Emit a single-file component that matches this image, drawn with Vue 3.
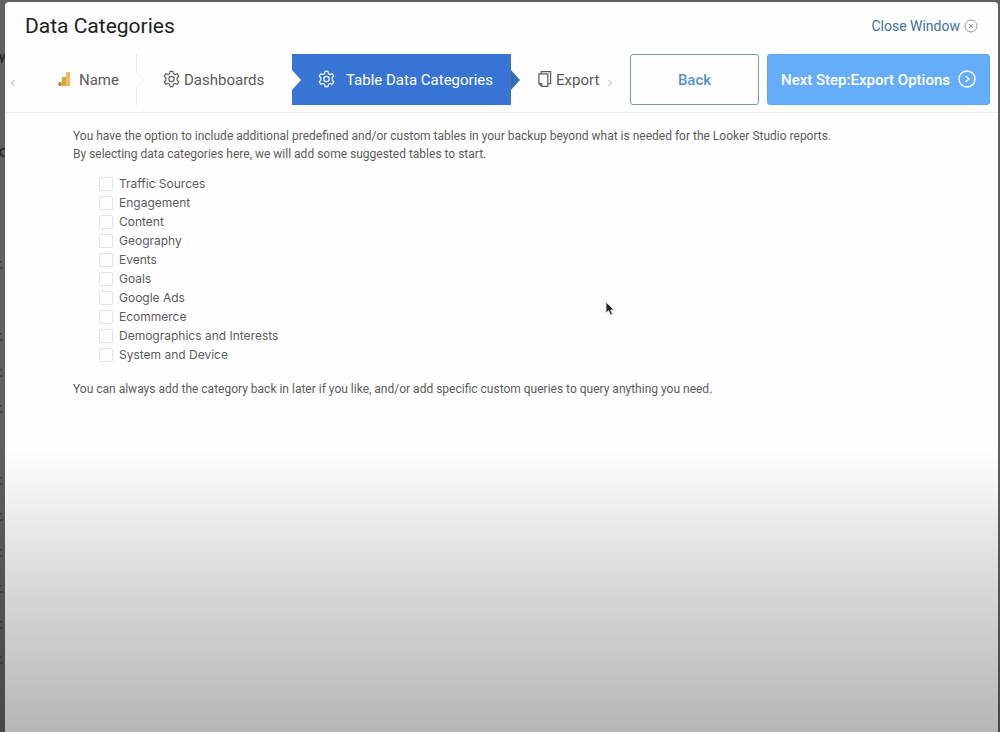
<script setup>
import { ref } from 'vue'

const categories = [
  'Traffic Sources',
  'Engagement',
  'Content',
  'Geography',
  'Events',
  'Goals',
  'Google Ads',
  'Ecommerce',
  'Demographics and Interests',
  'System and Device',
]
const selected = ref([])
const edgeMarks = [262, 334, 370, 406, 478, 514, 550, 586, 622, 657]
const gear =
  'M8 1.5h3l.7 2.500 1.700 1 2.500-.800 1.700 2.700-1.800 1.800v2.600l1.800 1.800-1.700 2.700-2.500-.800-1.700 1-.700 2.500H8l-.700-2.500-1.700-1-2.500.800-1.700-2.700 1.800-1.800V8.700L1.400 6.900l1.700-2.700 2.500.800 1.700-1z'
</script>

<template>
  <div class="backdrop">
    <svg class="behind" width="5" height="700" viewBox="0 0 5 700" aria-hidden="true">
      <path d="M0 54l2 7 3-7M5 149q-4-1-5 3q1 5 5 4" />
      <path v-for="y in edgeMarks" :key="y" class="mark" :d="`M0 ${y}h2M0 ${y + 6}h3`" />
    </svg>

    <main class="modal">
      <header class="title-bar">
        <h1>Data Categories</h1>
        <a class="close" href="#">
          Close Window
          <svg width="14" height="14" viewBox="0 0 14 14" aria-hidden="true">
            <circle cx="7" cy="7" r="6" />
            <path d="M5 5l4 4M9 5l-4 4" />
          </svg>
        </a>
      </header>

      <div class="toolbar">
        <nav class="wizard" aria-label="Steps">
          <button class="scroll prev" type="button" aria-label="Previous steps">
            <svg width="6" height="8" viewBox="0 0 6 8"><path d="M4.500 1L1.500 4l3 3" /></svg>
          </button>
          <a class="step name" href="#">
            <svg width="13" height="16" viewBox="0 0 13 16" aria-hidden="true">
              <rect x="8" y="1" width="4" height="14" fill="#ecbc62" />
              <rect x="4" y="6" width="4" height="9" fill="#dda33c" />
              <circle cx="2" cy="13" r="2" fill="#b98a3c" />
            </svg>
            <span>Name</span>
          </a>
          <svg class="divider" width="10" height="51" viewBox="0 0 10 51" aria-hidden="true">
            <path d="M1.500 0v18l7 8-7 8v17" />
          </svg>
          <a class="step dashboards" href="#">
            <svg class="line" width="17" height="18" viewBox="0 0 19 20" aria-hidden="true">
              <path :d="gear" /><circle cx="9.500" cy="10" r="3" />
            </svg>
            <span>Dashboards</span>
          </a>
          <a class="step active" href="#" aria-current="step">
            <svg class="line" width="17" height="18" viewBox="0 0 19 20" aria-hidden="true">
              <path :d="gear" /><circle cx="9.500" cy="10" r="3" />
            </svg>
            <span>Table Data Categories</span>
          </a>
          <a class="step export" href="#">
            <svg class="line" width="14" height="18" viewBox="0 0 15 18" aria-hidden="true">
              <path d="M3.500 3.500V1h10v13H11" />
              <path d="M1 3.500h9.500V17H4l-3-3zM1 14h3v3" />
            </svg>
            <span>Export</span>
          </a>
          <button class="scroll next" type="button" aria-label="More steps">
            <svg width="6" height="8" viewBox="0 0 6 8"><path d="M1.500 1l3 3-3 3" /></svg>
          </button>
        </nav>
        <button class="btn back" type="button"><span>Back</span></button>
        <button class="btn forward" type="button">
          <span>Next Step:Export Options</span>
          <svg width="18" height="18" viewBox="0 0 18 18" aria-hidden="true">
            <circle cx="9" cy="9" r="8" /><path d="M7.500 6l3.500 3-3.500 3" />
          </svg>
        </button>
      </div>

      <section class="content">
        <p>
          You have the option to include additional predefined and/or custom tables in your backup beyond what is needed for the Looker Studio reports.<br />
          By selecting data categories here, we will add some suggested tables to start.
        </p>
        <ul>
          <li v-for="c in categories" :key="c">
            <label><input v-model="selected" type="checkbox" :value="c" /><span>{{ c }}</span></label>
          </li>
        </ul>
        <p>You can always add the category back in later if you like, and/or add specific custom queries to query anything you need.</p>
      </section>
    </main>

    <svg class="pointer" width="12" height="18" viewBox="0 0 12 18" aria-hidden="true">
      <path d="M2 2v11l2.500-2.300 2 4.300 2-1-2-4H10z" />
    </svg>
  </div>
</template>

<style>
body {
  margin: 0;
}
</style>

<style scoped>
* {
  box-sizing: border-box;
}
.backdrop {
  position: relative;
  display: flex;
  min-height: 100vh;
  padding: 2px 2px 0 5px;
  background: linear-gradient(#606060 60%, #484848);
  font-family: Roboto, sans-serif;
}
.behind {
  position: absolute;
  top: 0;
  left: 0;
  fill: none;
  stroke: #2c2c2c;
  stroke-width: 2;
}
.mark {
  stroke-width: 1;
}
.modal {
  flex: 1;
  min-width: 0;
  border-radius: 4px 4px 0 0;
  background: linear-gradient(#fefefe 61%, #f1f1f1 68%, #dadada 79%, #b6b6b6);
}
.title-bar {
  display: flex;
  align-items: center;
  justify-content: space-between;
  height: 47px;
  padding: 0 20px;
}
h1 {
  margin: 0;
  color: #222;
  font-size: 21px;
  font-weight: 400;
}
.close {
  display: flex;
  align-items: center;
  gap: 4px;
  color: #41719f;
  font-size: 14px;
  text-decoration: none;
}
.close svg {
  fill: none;
  stroke: #999;
}
.toolbar {
  display: flex;
  align-items: center;
  height: 64px;
  padding: 5px 8px 8px 0;
  border-bottom: 1px solid #e8e8e8;
}
.wizard {
  display: flex;
  flex: 1;
  align-items: center;
  height: 51px;
}
.scroll {
  display: flex;
  padding: 0;
  border: 0;
  background: none;
}
.scroll svg {
  fill: none;
  stroke: #aaa;
}
.scroll.prev {
  width: 12px;
  margin-top: 8px;
  padding-left: 5px;
}
.scroll.next {
  margin: 8px 0 0 8px;
}
.step {
  display: flex;
  align-items: center;
  height: 100%;
  gap: 4px;
  color: #5c5c5c;
  font-size: 15px;
  text-decoration: none;
  white-space: nowrap;
}
.step span,
.btn span {
  padding-top: 1px;
}
.step svg {
  flex: none;
}
.line {
  fill: none;
  stroke: currentColor;
  stroke-width: 1.3;
}
.name {
  width: 118px;
  gap: 8px;
  padding-left: 41px;
}
.divider {
  flex: none;
  fill: none;
  stroke: #e8e8e8;
}
.dashboards {
  width: 147px;
  padding-left: 18px;
}
.active {
  position: relative;
  width: 219px;
  gap: 11px;
  padding-left: 26px;
  background: #3874d3;
  color: #fff;
}
.active::before,
.active::after {
  content: '';
  position: absolute;
  top: 16px;
  border: solid transparent;
  border-width: 10px 0 10px 9px;
}
.active::before {
  left: 0;
  border-left-color: #fefefe;
}
.active::after {
  left: 100%;
  border-left-color: #3b6bb5;
}
.export {
  padding-left: 27px;
}
.btn {
  display: flex;
  align-items: center;
  justify-content: center;
  height: 51px;
  border-radius: 3px;
  font-family: Roboto, sans-serif;
  font-size: 15px;
  font-weight: 500;
  white-space: nowrap;
}
.back {
  width: 129px;
  margin-right: 8px;
  border: 1px solid #7899b8;
  background: #fefefe;
  color: #5a93c8;
}
.forward {
  width: 223px;
  gap: 8px;
  padding: 0;
  border: 1px solid #5fa4ef;
  background: #65adf9;
  color: #fff;
}
.forward svg {
  fill: none;
  stroke: #fff;
  stroke-width: 1.4;
}
.content {
  padding: 14px 68px;
  color: #5c5c5c;
  font-size: 12px;
  line-height: 18px;
}
p {
  margin: 0;
}
ul {
  display: grid;
  gap: 1px;
  margin: 12px 0 16px;
  padding: 0 0 0 26px;
  font-family: Inter, sans-serif;
  list-style: none;
}
label {
  display: flex;
  align-items: center;
  gap: 6px;
}
input {
  width: 14px;
  height: 14px;
  margin: 0;
  border: 1px solid #e2e2e2;
  border-radius: 2px;
  background: #fefefe;
  appearance: none;
}
input:checked {
  background: #3874d3;
}
.pointer {
  position: absolute;
  top: 300px;
  left: 604px;
  fill: #222;
  stroke: #ddd;
  pointer-events: none;
}
</style>
